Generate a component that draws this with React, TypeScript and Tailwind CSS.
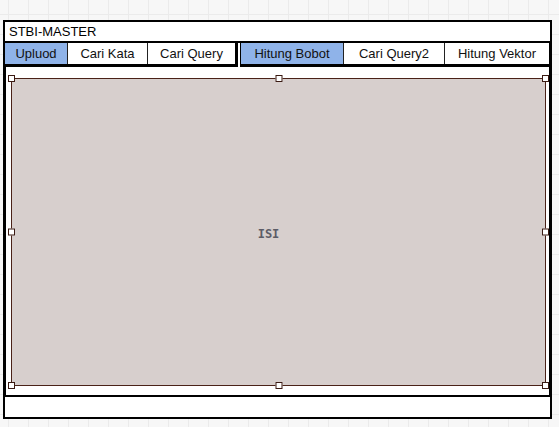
import React from 'react';

const font = { fontFamily: '"Liberation Sans", Arial, sans-serif' };

const Handle = ({ className }: { className: string }) => (
  <div className={`absolute w-[7px] h-[7px] bg-white border border-[#3a1a12] ${className}`} />
);

const Tab = ({ label, active, className }: { label: string; active?: boolean; className?: string }) => (
  <div
    className={`h-full flex items-center justify-center text-[13px] text-[#111] ${active ? 'bg-[#8fb3e9]' : 'bg-white'} ${className ?? ''}`}
  >
    {label}
  </div>
);

export default function App() {
  return (
    <div
      className="w-[559px] h-[427px] overflow-hidden bg-[#f7f7f7] bg-[linear-gradient(to_right,#ebebeb_1px,transparent_1px),linear-gradient(to_bottom,#ebebeb_1px,transparent_1px)] bg-[size:20px_20px] bg-[position:8px_14px] pt-[20px] pl-[3px]"
      style={font}
    >
      <div className="w-[549px] flex flex-col">
        {/* title bar */}
        <div className="h-[23px] border-2 border-black bg-white flex items-center px-[4px] text-[13px] text-black">
          STBI-MASTER
        </div>

        {/* tab bars */}
        <div className="h-[24px] flex">
          <div className="w-[235px] flex border-l-2 border-b-[3px] border-r-[3px] border-black bg-white">
            <Tab label="Upluod" active className="w-[63px] border-r border-[#222]" />
            <Tab label="Cari Kata" className="w-[80px] border-r border-[#222]" />
            <Tab label="Cari Query" className="flex-1" />
          </div>
          <div className="w-[2px] bg-white" />
          <div className="flex-1 flex border-l border-b-[3px] border-r-[3px] border-black bg-white">
            <Tab label="Hitung Bobot" active className="w-[103px] border-r border-[#222]" />
            <Tab label="Cari Query2" className="w-[101px] border-r border-[#222]" />
            <Tab label="Hitung Vektor" className="flex-1" />
          </div>
        </div>

        {/* content */}
        <div className="h-[328px] bg-white border-l-[3px] border-r-[3px] border-black pt-[11px] pb-[9px] pl-[5px] pr-[3px]">
          <div className="relative h-full bg-[#d7cfcd] border border-[#4a2218] flex items-center justify-center">
            <span
              className="relative -left-[10px] top-[2px] text-[12px] font-bold text-[#5c5c66]"
              style={{ fontFamily: '"DejaVu Sans Mono", monospace' }}
            >
              ISI
            </span>
            <Handle className="-left-[4px] -top-[4px]" />
            <Handle className="left-1/2 -translate-x-1/2 -top-[4px]" />
            <Handle className="-right-[4px] -top-[4px]" />
            <Handle className="-left-[4px] top-1/2 -translate-y-1/2" />
            <Handle className="-right-[4px] top-1/2 -translate-y-1/2" />
            <Handle className="-left-[4px] -bottom-[4px]" />
            <Handle className="left-1/2 -translate-x-1/2 -bottom-[4px]" />
            <Handle className="-right-[4px] -bottom-[4px]" />
          </div>
        </div>

        {/* status bar */}
        <div className="h-[24px] border-2 border-black bg-white" />
      </div>
    </div>
  );
}
